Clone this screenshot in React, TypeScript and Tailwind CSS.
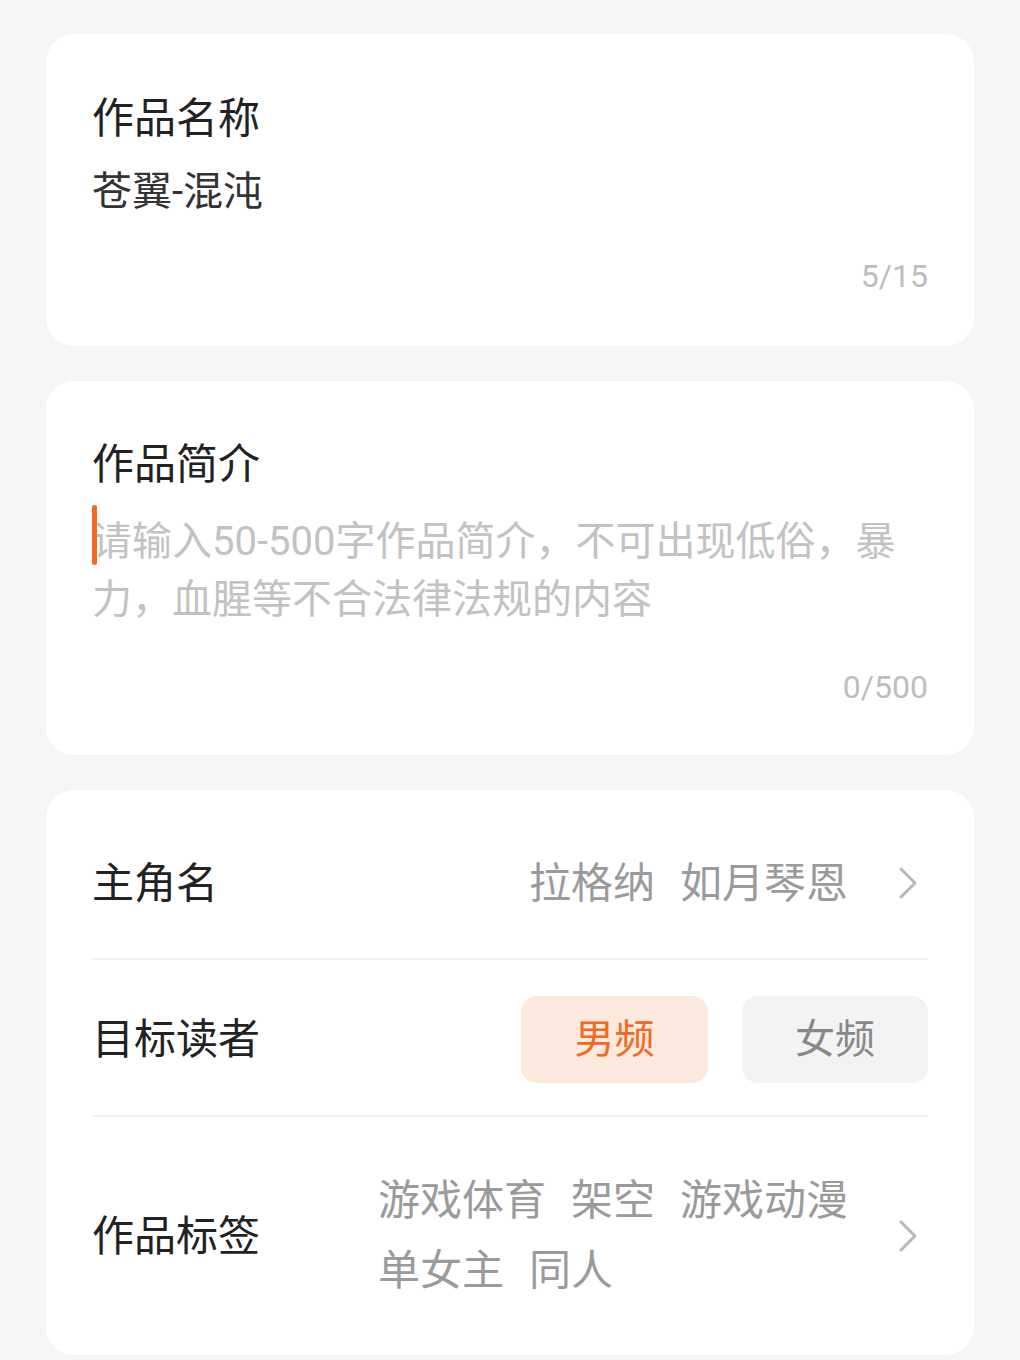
import React from 'react';

const font = { fontFamily: 'Roboto, "Noto Sans CJK SC", "Noto Sans", sans-serif' };

function Chevron() {
  return (
    <svg width="20" height="34" viewBox="0 0 20 34" fill="none" className="shrink-0">
      <path d="M3 3 L17 17 L3 31" stroke="#b8b8b8" strokeWidth="3" strokeLinecap="round" strokeLinejoin="round" />
    </svg>
  );
}

export default function App() {
  return (
    <div style={font} className="min-h-[1360px] bg-[#f5f5f5] px-[46px] pt-[34px] flex flex-col gap-[35px]">
      <div className="bg-white rounded-[28px] px-[46px] pt-[55px] pb-[48px] flex flex-col">
        <div className="text-[42px] leading-[60px] text-[#222]">作品名称</div>
        <div className="text-[40px] leading-[60px] text-[#333] mt-[13px]">苍翼-混沌</div>
        <div className="text-[32px] leading-[44px] text-[#bdbdbd] text-right mt-[32px]">5/15</div>
      </div>

      <div className="bg-white rounded-[28px] px-[46px] pt-[54px] pb-[46px] flex flex-col">
        <div className="text-[42px] leading-[60px] text-[#222]">作品简介</div>
        <div className="relative text-[40px] leading-[58px] text-[#c2c2c2] mt-[18px]">
          <span className="absolute left-0 top-[-8px] w-[5px] h-[60px] bg-[#f26a21] rounded-full" />
          请输入50-500字作品简介，不可出现低俗，暴力，血腥等不合法律法规的内容
        </div>
        <div className="text-[32px] leading-[44px] text-[#bdbdbd] text-right mt-[36px]">0/500</div>
      </div>

      <div className="bg-white rounded-[28px] px-[46px] pt-[18px] flex flex-col">
        <div className="h-[152px] flex items-center justify-between border-b-2 border-[#f0f0f0]">
          <div className="text-[42px] text-[#222]">主角名</div>
          <div className="flex items-center gap-[50px]">
            <div className="flex gap-[25px] text-[42px] text-[#9a9a9a]">
              <span>拉格纳</span>
              <span>如月琴恩</span>
            </div>
            <div className="pr-[10px]"><Chevron /></div>
          </div>
        </div>
        <div className="h-[157px] pt-[4px] flex items-center justify-between border-b-2 border-[#f0f0f0]">
          <div className="text-[42px] text-[#222]">目标读者</div>
          <div className="flex items-center gap-[34px]">
            <div className="w-[187px] h-[87px] rounded-[16px] bg-[#fde9de] text-[#f26a21] text-[40px] flex items-center justify-center">男频</div>
            <div className="w-[186px] h-[87px] rounded-[16px] bg-[#f3f3f3] text-[#888] text-[40px] flex items-center justify-center">女频</div>
          </div>
        </div>
        <div className="h-[238px] flex items-center justify-between">
          <div className="text-[42px] text-[#222]">作品标签</div>
          <div className="flex items-center gap-[50px]">
            <div className="flex flex-col text-[42px] leading-[70px] text-[#9a9a9a]">
              <div className="flex gap-[25px]">
                <span>游戏体育</span>
                <span>架空</span>
                <span>游戏动漫</span>
              </div>
              <div className="flex gap-[25px]">
                <span>单女主</span>
                <span>同人</span>
              </div>
            </div>
            <div className="pr-[10px]"><Chevron /></div>
          </div>
        </div>
      </div>
    </div>
  );
}
